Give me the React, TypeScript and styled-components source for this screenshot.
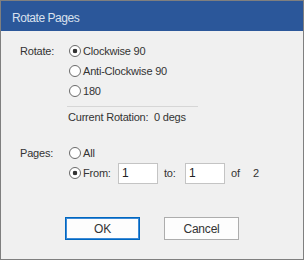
import React, { useState } from 'react';
import styled, { createGlobalStyle } from 'styled-components';

const GlobalStyle = createGlobalStyle`
  html, body {
    margin: 0;
    padding: 0;
    background: #f0f0f0;
  }
  * {
    box-sizing: border-box;
  }
`;

const Dialog = styled.div`
  width: 304px;
  height: 260px;
  border: 1px solid #7f7f7f;
  background: #f0f0f0;
  display: flex;
  flex-direction: column;
  font-family: "Liberation Sans", Arial, sans-serif;
  font-size: 11px;
  letter-spacing: -0.2px;
  color: #333;
`;

const TitleBar = styled.div`
  height: 30px;
  background: #2b579a;
  color: #d9e1ee;
  font-size: 12px;
  letter-spacing: -0.45px;
  display: flex;
  align-items: center;
  padding: 3px 0 0 11px;
`;

const Body = styled.div`
  flex: 1;
  display: flex;
  flex-direction: column;
  padding: 10px 0 0 19px;
`;

const Section = styled.div<{ $gap?: number }>`
  display: grid;
  grid-template-columns: 49px 1fr;
  margin-top: ${(p) => p.$gap ?? 0}px;
`;

const Label = styled.div`
  height: 20px;
  display: flex;
  align-items: center;
`;

const Options = styled.div`
  display: flex;
  flex-direction: column;
`;

const Row = styled.label`
  height: 20px;
  display: flex;
  align-items: center;
  cursor: default;
`;

const Radio = styled.input.attrs({ type: 'radio' })`
  appearance: none;
  margin: 0 2px 0 0;
  width: 12px;
  height: 12px;
  border: 1px solid #6a6a6a;
  border-radius: 50%;
  background: #fff;
  flex: none;
  &:checked {
    background: radial-gradient(circle, #333 0 2px, #fff 2.6px);
  }
`;

const Separator = styled.div`
  width: 131px;
  height: 1px;
  background: #d6d6d6;
  margin: 5px 0 0 -2px;
`;

const Info = styled.div`
  height: 20px;
  display: flex;
  align-items: center;
  margin-left: -1px;
`;

const InfoLabel = styled.span`
  width: 86px;
`;

const FromText = styled.span`
  width: 35px;
`;

const NumberBox = styled.input`
  width: 40px;
  height: 21px;
  border: 1px solid #c4c4c4;
  background: #fff;
  font-family: "Liberation Sans", Arial, sans-serif;
  font-size: 12px;
  color: #222;
  padding: 0 0 0 3px;
  margin: 0;
  outline: none;
`;

const Small = styled.span<{ $w: number }>`
  width: ${(p) => p.$w}px;
  padding-left: 6px;
`;

const Buttons = styled.div`
  display: flex;
  justify-content: center;
  gap: 24px;
  margin: 34px 0 0 -19px;
`;

const Button = styled.button<{ $primary?: boolean }>`
  width: 75px;
  height: 23px;
  background: #fdfdfd;
  border: 1px solid ${(p) => (p.$primary ? '#0067c0' : '#adadad')};
  box-shadow: ${(p) => (p.$primary ? 'inset 0 0 0 1px #3d8ad6' : 'none')};
  font-family: "Liberation Sans", Arial, sans-serif;
  font-size: 12px;
  letter-spacing: -0.2px;
  color: #333;
  padding: 0;
`;

export default function App() {
  const [rotation, setRotation] = useState('cw');
  const [pages, setPages] = useState('from');

  return (
    <>
      <GlobalStyle />
      <Dialog>
        <TitleBar>Rotate Pages</TitleBar>
        <Body>
          <Section>
            <Label>Rotate:</Label>
            <Options>
              <Row>
                <Radio name="rot" checked={rotation === 'cw'} onChange={() => setRotation('cw')} />
                Clockwise 90
              </Row>
              <Row>
                <Radio name="rot" checked={rotation === 'acw'} onChange={() => setRotation('acw')} />
                Anti-Clockwise 90
              </Row>
              <Row>
                <Radio name="rot" checked={rotation === '180'} onChange={() => setRotation('180')} />
                180
              </Row>
              <Separator />
              <Info>
                <InfoLabel>Current Rotation:</InfoLabel>
                0 degs
              </Info>
            </Options>
          </Section>
          <Section $gap={16}>
            <Label>Pages:</Label>
            <Options>
              <Row>
                <Radio name="pages" checked={pages === 'all'} onChange={() => setPages('all')} />
                All
              </Row>
              <Row>
                <Radio name="pages" checked={pages === 'from'} onChange={() => setPages('from')} />
                <FromText>From:</FromText>
                <NumberBox defaultValue="1" />
                <Small $w={27}>to:</Small>
                <NumberBox defaultValue="1" />
                <Small $w={28}>of</Small>
                2
              </Row>
            </Options>
          </Section>
          <Buttons>
            <Button $primary>OK</Button>
            <Button>Cancel</Button>
          </Buttons>
        </Body>
      </Dialog>
    </>
  );
}
